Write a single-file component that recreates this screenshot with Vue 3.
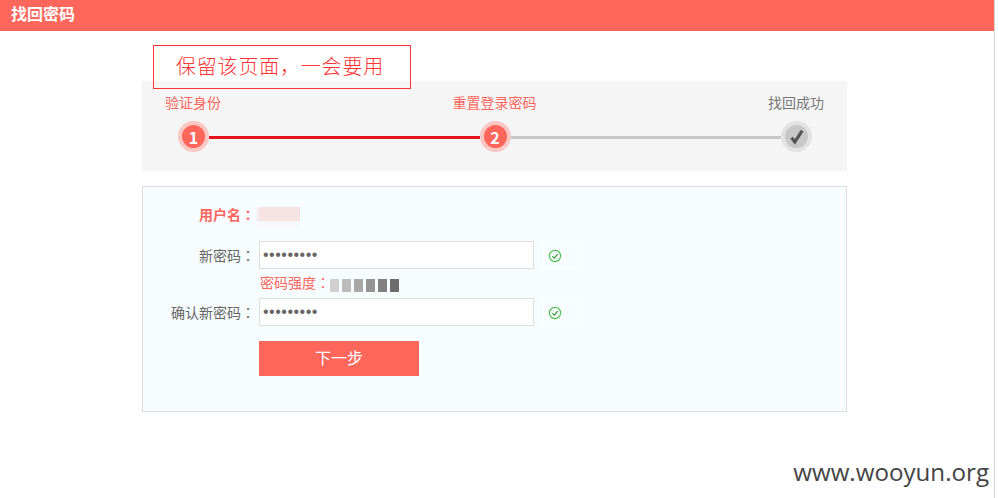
<script setup>
const bars = ['#d0d0d0', '#bcbcbc', '#a8a8a8', '#949494', '#808080', '#6c6c6c']
</script>

<template>
  <div class="page">
    <header class="top">找回密码</header>
    <main class="content">
      <div class="note">保留该页面，一会要用</div>
      <section class="steps">
        <div class="labels">
          <span class="on">验证身份</span>
          <span class="on">重置登录密码</span>
          <span>找回成功</span>
        </div>
        <div class="track">
          <span class="dot on"><b>1</b></span>
          <span class="line red"></span>
          <span class="dot on"><b>2</b></span>
          <span class="line"></span>
          <span class="dot done">
            <svg width="16" height="16" viewBox="0 0 16 16"><path d="M2.6 8.6l3.2 4.4L13.2 1.6" fill="none" stroke="#555" stroke-width="3.2"/></svg>
          </span>
        </div>
      </section>
      <form class="panel" @submit.prevent>
        <div class="row user">
          <label>用户名<span class="colon">：</span></label>
          <span class="blur"></span>
        </div>
        <div class="row field">
          <label>新密码<span class="colon">：</span></label>
          <input type="password" value="123456789" readonly />
          <span class="ok">
            <svg width="14" height="14" viewBox="0 0 14 14"><circle cx="7" cy="7" r="5.6" fill="none" stroke="#52c152" stroke-width="1.2"/><path d="M4.4 7.2l1.9 2 3.4-4" fill="none" stroke="#3a9a3a" stroke-width="1.2"/></svg>
          </span>
        </div>
        <div class="strength">
          <span>密码强度<span class="colon">：</span></span>
          <i v-for="c in bars" :key="c" :style="{ background: c }"></i>
        </div>
        <div class="row field">
          <label>确认新密码<span class="colon">：</span></label>
          <input type="password" value="123456789" readonly />
          <span class="ok">
            <svg width="14" height="14" viewBox="0 0 14 14"><circle cx="7" cy="7" r="5.6" fill="none" stroke="#52c152" stroke-width="1.2"/><path d="M4.4 7.2l1.9 2 3.4-4" fill="none" stroke="#3a9a3a" stroke-width="1.2"/></svg>
          </span>
        </div>
        <button class="next" type="button">下一步</button>
      </form>
    </main>
    <div class="mark">www.wooyun.org</div>
  </div>
</template>

<style>
html, body { margin: 0; background: #fff; }
</style>

<style scoped>
.page {
  position: relative;
  box-sizing: content-box;
  width: 994px;
  height: 498px;
  border-right: 1px solid #d4d4d4;
  overflow: hidden;
  font-family: "Noto Sans CJK SC", "Liberation Sans", sans-serif;
  font-size: 14px;
  color: #666;
}
.colon { font-family: "Noto Sans CJK TC", sans-serif; }
.top {
  height: 31px;
  line-height: 27px;
  padding-left: 11px;
  background: #ff665c;
  color: #fff;
  font-size: 16px;
  font-weight: 700;
}
.content {
  position: relative;
  width: 705px;
  margin-left: 142px;
  padding-top: 50px;
}
.note {
  position: absolute;
  left: 11px;
  top: 14px;
  z-index: 1;
  box-sizing: border-box;
  width: 258px;
  height: 44px;
  padding-left: 22px;
  line-height: 40px;
  border: 1px solid #f33;
  color: #f33;
  font-size: 20px;
  font-weight: 300;
  letter-spacing: 0.8px;
  white-space: nowrap;
}
.steps {
  box-sizing: border-box;
  height: 90px;
  background: #f5f5f5;
  padding-top: 11px;
}
.labels {
  display: flex;
  justify-content: space-between;
  padding: 0 23px 0 23px;
  height: 20px;
  line-height: 20px;
  color: #777;
}
.labels .on { color: #ff665c; }
.track {
  display: flex;
  align-items: center;
  margin-top: 9px;
  padding: 0 35px 0 36px;
}
.dot {
  flex: none;
  box-sizing: border-box;
  width: 31px;
  height: 31px;
  border-radius: 50%;
  border: 4px solid #fac8c4;
  display: flex;
  align-items: center;
  justify-content: center;
}
.dot.on { background: #ff665c; color: #fff; font-size: 16px; }
.dot.done { background: #c8c8c8; border-color: #e2e2e2; }
.line { flex: 1; height: 3px; margin-top: 2px; background: #c8c8c8; }
.line.red { background: #e8131f; }
.panel {
  box-sizing: border-box;
  height: 226px;
  margin-top: 15px;
  border: 1px solid #ddd;
  background: #f7fcff;
  padding-top: 20px;
}
.row { display: flex; align-items: center; }
.row label {
  flex: none;
  width: 112px;
  margin-right: 4px;
  text-align: right;
}
.user { align-items: flex-start; height: 20px; margin-bottom: 14px; color: #ff665c; }
.user label { font-weight: 700; line-height: 15px; }
.blur {
  width: 45px;
  height: 20px;
  margin-left: -4px;
  background: linear-gradient(90deg, #f7fcff, #f7fcff00 5px), linear-gradient(#f6e4e4 0 14px, #f7f8fa 14px);
}
.field { height: 28px; }
.field input {
  box-sizing: border-box;
  width: 275px;
  height: 28px;
  padding: 0 3px;
  border: 1px solid #ddd;
  background: #fff;
  color: #666;
  font-size: 16px;
  letter-spacing: 0.5px;
  font-family: "Liberation Sans", sans-serif;
  outline: none;
}
.ok {
  box-sizing: border-box;
  width: 37px;
  height: 28px;
  margin-left: 9px;
  border: 1px solid #fcfeff;
  padding: 1px 0 0 4px;
  display: flex;
  align-items: center;
}
.strength {
  box-sizing: border-box;
  display: flex;
  align-items: flex-start;
  height: 29px;
  padding: 4px 0 0 117px;
  line-height: 19px;
  color: #ff665c;
}
.strength i {
  flex: none;
  width: 9px;
  height: 13px;
  margin: 6px 3px 0 0;
}
.next {
  display: block;
  width: 160px;
  height: 35px;
  margin: 15px 0 0 116px;
  padding: 0 0 3px;
  border: 0;
  background: #ff665c;
  color: #fff;
  font-family: inherit;
  font-size: 16px;
}
.mark {
  position: absolute;
  right: 5px;
  bottom: 10px;
  color: #444;
  font-family: "Open Sans", sans-serif;
  font-size: 24.15px;
  line-height: 32px;
}
</style>
